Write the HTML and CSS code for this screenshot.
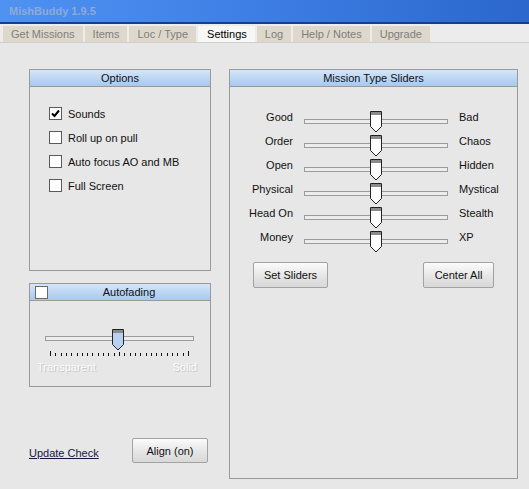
FILE: index.html
```html
<!DOCTYPE html>
<html>
<head>
<meta charset="utf-8">
<title>MishBuddy 1.9.5</title>
<link rel="stylesheet" href="styles.css">
</head>
<body>
<div class="window">
  <div class="titlebar"><span class="title">MishBuddy 1.9.5</span></div>
  <div class="tabs">
    <div class="tab">Get Missions</div>
    <div class="tab">Items</div>
    <div class="tab">Loc / Type</div>
    <div class="tab active">Settings</div>
    <div class="tab">Log</div>
    <div class="tab">Help / Notes</div>
    <div class="tab">Upgrade</div>
  </div>
  <div class="content">
    <div class="left">
      <div class="panel options">
        <div class="phead">Options</div>
        <div class="obody">
          <label class="crow"><span class="cbox checked"><svg width="11" height="11" viewBox="0 0 11 11"><path d="M2 5.5 L4.5 8 L9 2.5" fill="none" stroke="#000" stroke-width="2"/></svg></span>Sounds</label>
          <label class="crow"><span class="cbox"></span>Roll up on pull</label>
          <label class="crow"><span class="cbox"></span>Auto focus AO and MB</label>
          <label class="crow"><span class="cbox"></span>Full Screen</label>
        </div>
      </div>
      <div class="panel fade">
        <div class="phead fhead"><span class="cbox hcbox"></span><span class="ftitle">Autofading</span></div>
        <div class="fbody">
          <div class="track ftrack">
            <svg class="thumb fthumb" width="13" height="22" viewBox="0 0 13 22"><path d="M0.5 0.5 H11.5 V15.5 L6 21 L0.5 15.5 Z" fill="#b9d1f1" stroke="#222"/><rect x="1" y="1" width="10" height="3" fill="#8a8a8a"/></svg>
          </div>
          <svg class="ticks" width="140" height="6" viewBox="0 0 140 6"><path d="M0.5 0v5M5.5 2v3M11.5 2v3M16.5 2v3M21.5 2v3M27.5 2v3M32.5 2v3M37.5 2v3M42.5 2v3M48.5 2v3M53.5 2v3M58.5 2v3M64.5 2v3M69.5 1v4M74.5 2v3M80.5 2v3M85.5 2v3M90.5 2v3M96.5 2v3M101.5 2v3M106.5 2v3M111.5 2v3M117.5 2v3M122.5 2v3M127.5 2v3M133.5 2v3M138.5 0v5" stroke="#111" stroke-width="1"/></svg>
          <div class="flabels"><span>Transparent</span><span>Solid</span></div>
        </div>
      </div>
      <div class="bottomrow">
        <a class="link" href="#">Update Check</a>
        <button class="btn align">Align (on)</button>
      </div>
    </div>
    <div class="panel sliders">
      <div class="phead">Mission Type Sliders</div>
      <div class="sbody">
        <div class="srow"><span class="sl">Good</span><div class="track strack"><svg class="thumb" width="13" height="22" viewBox="0 0 13 22"><path d="M0.5 0.5 H11.5 V15.5 L6 21 L0.5 15.5 Z" fill="#fff" stroke="#222"/><rect x="1" y="1" width="10" height="3" fill="#8a8a8a"/></svg></div><span class="sr">Bad</span></div>
        <div class="srow"><span class="sl">Order</span><div class="track strack"><svg class="thumb" width="13" height="22" viewBox="0 0 13 22"><path d="M0.5 0.5 H11.5 V15.5 L6 21 L0.5 15.5 Z" fill="#fff" stroke="#222"/><rect x="1" y="1" width="10" height="3" fill="#8a8a8a"/></svg></div><span class="sr">Chaos</span></div>
        <div class="srow"><span class="sl">Open</span><div class="track strack"><svg class="thumb" width="13" height="22" viewBox="0 0 13 22"><path d="M0.5 0.5 H11.5 V15.5 L6 21 L0.5 15.5 Z" fill="#fff" stroke="#222"/><rect x="1" y="1" width="10" height="3" fill="#8a8a8a"/></svg></div><span class="sr">Hidden</span></div>
        <div class="srow"><span class="sl">Physical</span><div class="track strack"><svg class="thumb" width="13" height="22" viewBox="0 0 13 22"><path d="M0.5 0.5 H11.5 V15.5 L6 21 L0.5 15.5 Z" fill="#fff" stroke="#222"/><rect x="1" y="1" width="10" height="3" fill="#8a8a8a"/></svg></div><span class="sr">Mystical</span></div>
        <div class="srow"><span class="sl">Head On</span><div class="track strack"><svg class="thumb" width="13" height="22" viewBox="0 0 13 22"><path d="M0.5 0.5 H11.5 V15.5 L6 21 L0.5 15.5 Z" fill="#fff" stroke="#222"/><rect x="1" y="1" width="10" height="3" fill="#8a8a8a"/></svg></div><span class="sr">Stealth</span></div>
        <div class="srow"><span class="sl">Money</span><div class="track strack"><svg class="thumb" width="13" height="22" viewBox="0 0 13 22"><path d="M0.5 0.5 H11.5 V15.5 L6 21 L0.5 15.5 Z" fill="#fff" stroke="#222"/><rect x="1" y="1" width="10" height="3" fill="#8a8a8a"/></svg></div><span class="sr">XP</span></div>
        <div class="btnrow">
          <button class="btn setbtn">Set Sliders</button>
          <button class="btn centerbtn">Center All</button>
        </div>
      </div>
    </div>
  </div>
</div>
</body>
</html>
```
FILE: styles.css
```css
html, body {
  margin: 0;
  padding: 0;
}
body {
  width: 529px;
  height: 489px;
  overflow: hidden;
  background: #e7e7e7;
  font-family: "Liberation Sans", Arial, sans-serif;
  font-size: 11px;
  color: #111;
}
.window {
  width: 529px;
  height: 489px;
}
.titlebar {
  height: 22px;
  border-bottom: 2px solid #173f86;
  background: linear-gradient(to right, #4f92f2 0%, #3f80e6 45%, #2b67cc 100%);
  display: flex;
  align-items: center;
  padding-left: 9px;
}
.title {
  font-weight: bold;
  font-size: 11px;
  color: #8eaad8;
}
.tabs {
  display: flex;
  gap: 2px;
  padding: 2px 0 0 3px;
  height: 16px;
  border-bottom: 1px solid #cfcfcf;
  background: #ececec;
}
.tab {
  height: 16px;
  line-height: 16px;
  padding: 0 8px;
  background: #ddd8cb;
  color: #7d7d7d;
}
.tab.active {
  background: #f7f7f5;
  color: #000;
  padding: 0 8px 0 9px;
}
.content {
  display: flex;
  gap: 18px;
  padding: 26px 0 0 29px;
}
.left {
  width: 182px;
  display: flex;
  flex-direction: column;
}
.panel {
  box-sizing: border-box;
  border: 1px solid #9a9a9a;
}
.phead {
  height: 16px;
  line-height: 16px;
  text-align: center;
  border-bottom: 1px solid #9a9a9a;
  background: linear-gradient(to bottom, #d4e6f9, #a8c8ee);
  color: #111;
}
.options {
  height: 202px;
}
.obody {
  padding: 20px 0 0 19px;
  display: flex;
  flex-direction: column;
  gap: 11px;
}
.crow {
  display: flex;
  align-items: center;
  gap: 6px;
  height: 13px;
}
.cbox {
  box-sizing: border-box;
  width: 13px;
  height: 13px;
  border: 1px solid #5a5a5a;
  background: #fff;
  display: flex;
  align-items: center;
  justify-content: center;
}
.fade {
  margin-top: 12px;
  height: 104px;
}
.fhead {
  display: flex;
  align-items: center;
}
.hcbox {
  margin-left: 5px;
  border-color: #6a6a6a;
}
.ftitle {
  flex: 1;
}
.fbody {
  padding-top: 35px;
  display: flex;
  flex-direction: column;
}
.track {
  position: relative;
  box-sizing: border-box;
  height: 5px;
  border: 1px solid #9c9c9c;
  background: #ececec;
}
.ftrack {
  margin-left: 15px;
  width: 149px;
}
.thumb {
  position: absolute;
  display: block;
}
.fthumb {
  left: 66px;
  top: -8px;
}
.ticks {
  display: block;
  margin: 10px 0 0 20px;
}
.flabels {
  display: flex;
  justify-content: space-between;
  padding: 4px 13px 0 7px;
  color: #fbfbfb;
  text-shadow: 1px 1px 0 #c9c9c9;
}
.bottomrow {
  margin-top: 51px;
  display: flex;
  justify-content: space-between;
  align-items: center;
  padding-right: 3px;
}
.link {
  color: #16163c;
  text-decoration: underline;
  margin-top: 5px;
}
.btn {
  box-sizing: border-box;
  height: 26px;
  border: 1px solid #a2a2a2;
  border-radius: 2px;
  background: linear-gradient(to bottom, #fbfbfb, #e4e4e4 60%, #d8d8d8);
  font-family: "Liberation Sans", Arial, sans-serif;
  font-size: 11px;
  color: #111;
  padding: 0;
}
.align {
  width: 76px;
  height: 25px;
}
.sliders {
  width: 289px;
  height: 410px;
}
.sbody {
  padding-top: 23px;
}
.srow {
  display: flex;
  align-items: flex-start;
  height: 24px;
  line-height: 14px;
}
.sl {
  width: 63px;
  text-align: right;
  margin-right: 11px;
}
.strack {
  width: 144px;
  margin-top: 9px;
}
.strack .thumb {
  left: 65px;
  top: -9px;
}
.sr {
  margin-left: 11px;
}
.btnrow {
  display: flex;
  justify-content: space-between;
  padding: 8px 23px 0 23px;
}
.setbtn {
  width: 75px;
}
.centerbtn {
  width: 71px;
}
```
